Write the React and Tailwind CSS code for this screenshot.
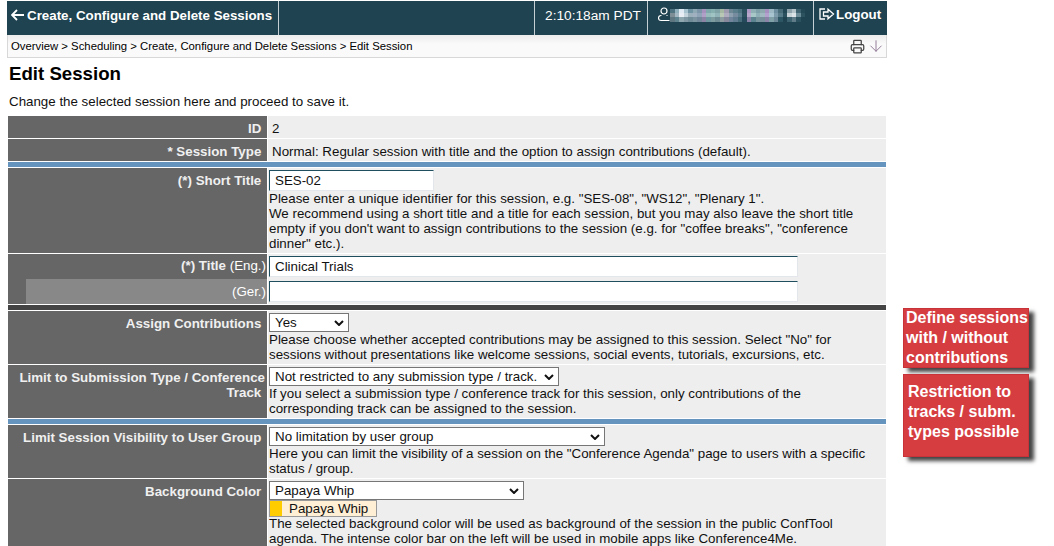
import React from "react";
import { Printer, ArrowDown } from "lucide-react";

// pixelated user name in the top bar, one colour per cell
const blurTop = ["#4f7380", "#8fb0bc", "#dfeaf2", "#a8c4d0", "#6f94a4", "#8ea8b4", "#7d95a8", "#a593bd", "#7fa8ac", "#86b0b0", "#7fa3a6", "#a5b8a4", "#a09cb0", "#6d8794", "#5b7f8c", "#4d7280", "#2a505d", "#ad9ac4", "#8fb0b4", "#7ea0a8", "#8ea8b0", "#a590c0", "#9cb8c4", "#6e8fa0", "#4a6d7a", "#234956", "#8fa4ac", "#b4c4c8", "#3f6270", "#234956"];
const blurMid = ["#7d8e96", "#a4b8c4", "#e8eef4", "#c4d4dc", "#9cb0bc", "#a0b0c0", "#90a4b8", "#b0a0c8", "#98bcbc", "#a0c4c4", "#90b4b8", "#b8c8b4", "#b0acc0", "#8ca0b0", "#788ca0", "#5c8090", "#2c5260", "#b8a8cc", "#a8c8c8", "#90b0b8", "#a0b8c0", "#b4a0cc", "#a8c4d0", "#7c9cac", "#587c8a", "#2c5260", "#c8d4d8", "#dce4e8", "#6c8c98", "#2c5260"];
const blurBottom = ["#5e7680", "#5f8490", "#8fa8b0", "#8098a4", "#6f8c98", "#7c93a0", "#74889c", "#8c84a4", "#7098a0", "#7c9ca0", "#708c94", "#8c9ca0", "#88889c", "#70849c", "#607c90", "#476c7a", "#24495a", "#8c84a8", "#5c8490", "#78949c", "#78909c", "#8c84a8", "#80a0a8", "#6c8898", "#2c5664", "#1f4350", "#3c6270", "#5f7c88", "#2c5260", "#1f4350"];

const Row = ({ label, plain, className = "", children }) => (
  <div className={`flex mb-px ${className}`}>
    <div className="w-[259px] shrink-0 bg-[#666666] text-[#f0f0f0] font-bold text-right pr-[2px] pl-2 pt-[5px] leading-[15px]">{label}&nbsp;</div>
    <div className={`flex-1 ml-px bg-[#eeeeee] pr-2 leading-[15px] ${plain ? "pl-[4px] pt-[5px]" : "pl-[1px] pt-[2px]"}`}>{children}</div>
  </div>
);

const Select = ({ className, children }) => (
  <div className={`h-[19px] bg-white border border-[#767676] pl-[5px] pr-[4px] flex items-center justify-between leading-none ${className}`}>
    <span>{children}</span>
    <svg width="10" height="6" viewBox="0 0 10 6" className="shrink-0" fill="none" stroke="#111" strokeWidth="2"><path d="M1 1l4 4 4-4" /></svg>
  </div>
);

const TextBox = ({ className, children }) => (
  <div className={`h-[21px] bg-white border border-[#e3e6ea] border-t-[#1f4e5f] border-l-[#1f4e5f] pl-[5px] flex items-center leading-none ${className}`}>{children}</div>
);

const Note = ({ className, children }) => (
  <div className={`absolute left-[903px] w-[126px] bg-[#d63d40] border border-[#c8333a] text-white font-bold text-[16px] leading-[20px] whitespace-nowrap shadow-[5px_4px_4px_#444444] ${className}`}>{children}</div>
);

export default function App() {
  return (
    <div className="relative w-[1054px] h-[546px] overflow-hidden bg-white text-[#111111] text-[13.33px] font-['Liberation_Sans',Arial,sans-serif]">
      <div className="pl-[7px] pt-[1px] w-[887px]">
        <div className="flex h-[34px] bg-[#1f4350] text-white font-bold text-[13.33px] leading-[30px]">
          <div className="w-[272px] flex items-start pl-[4px] border-r border-[#c5d0d4] whitespace-nowrap">
            <svg width="13" height="12" viewBox="0 0 13 12" fill="none" stroke="white" strokeWidth="1.8" className="mt-[8px] mr-[3px] shrink-0"><path d="M6 1L1 6l5 5M1 6h12" /></svg>
            Create, Configure and Delete Sessions
          </div>
          <div className="flex-1" />
          <div className="w-[113px] border-l border-[#c5d0d4] text-center font-normal text-[13.7px] pl-[4px]">2:10:18am PDT</div>
          <div className="w-[166px] border-l border-[#c5d0d4] flex items-start pl-[10px]">
            <svg width="12" height="15" viewBox="0 0 12 15" fill="none" stroke="white" strokeWidth="1.2" className="mt-[6px] shrink-0">
              <circle cx="6" cy="4" r="3" />
              <path d="M3.5 8.5H3a2.4 2.4 0 0 0 0 5h8.5" />
              <path d="M8.5 8.5H9.5" />
            </svg>
            <svg width="135" height="13" viewBox="0 0 135 13" className="mt-[8px] shrink-0" shapeRendering="crispEdges">
              {blurTop.map((c, i) => <rect key={i} x={i * 4.5} y="0" width="4.5" height="4" fill={c} />)}
              {blurMid.map((c, i) => <rect key={i} x={i * 4.5} y="4" width="4.5" height="4" fill={c} />)}
              {blurBottom.map((c, i) => <rect key={i} x={i * 4.5} y="8" width="4.5" height="5" fill={c} />)}
            </svg>
          </div>
          <div className="w-[74px] border-l border-[#c5d0d4] flex items-start pl-[5px] leading-[28px]">
            <svg width="16" height="12" viewBox="0 0 16 12" fill="none" stroke="white" strokeWidth="1.3" className="mt-[7px] mr-[1px] shrink-0">
              <path d="M6 1H1v10h5" />
              <path d="M4.5 4h4.5V1.2L14.5 6 9 10.8V8H4.5z" />
            </svg>
            Logout
          </div>
        </div>
        <div className="h-[23px] bg-gradient-to-b from-[#ececec] to-[#fafafa] to-40% border-b border-x border-[#d8d8d8] flex items-center justify-between pl-[3px] pr-[1px] text-[11.33px] text-[#000000]">
          <span>Overview &gt; Scheduling &gt; Create, Configure and Delete Sessions &gt; Edit Session</span>
          <div className="flex items-center gap-[2px] text-[#444444]">
            <Printer size={15} />
            <ArrowDown size={18} strokeWidth={1.2} className="text-[#8a7090]" />
          </div>
        </div>
      </div>

      <div className="pl-[9px] mt-[4px] text-[18.67px] font-bold leading-[24px] text-black">Edit Session</div>
      <div className="pl-[9px] mt-[8px] leading-[15px]">Change the selected session here and proceed to save it.</div>

      <div className="ml-[8px] mt-[7px] w-[878px]">
        <Row plain label="ID" className="h-[22px]">2</Row>
        <Row plain label="* Session Type" className="h-[22px]">Normal: Regular session with title and the option to assign contributions (default).</Row>
        <div className="h-[5px] bg-[#6595bf] mb-px" />

        <Row label="(*) Short Title" className="h-[85px]">
          <TextBox className="w-[165px]">SES-02</TextBox>
          <div>Please enter a unique identifier for this session, e.g. "SES-08", "WS12", "Plenary 1".<br />We recommend using a short title and a title for each session, but you may also leave the short title<br />empty if you don't want to assign contributions to the session (e.g. for "coffee breaks", "conference<br />dinner" etc.).</div>
        </Row>

        <div className="flex h-[50px] mb-px">
          <div className="w-[259px] shrink-0 bg-[#666666] text-white text-right flex flex-col">
            <div className="h-[25px] pr-[1px] pt-[4px] leading-[15px]"><b className="text-[#f0f0f0]">(*) Title</b> (Eng.)</div>
            <div className="ml-[18px] flex-1 bg-[#888888] pr-[1px] pt-[5px] leading-[15px]">(Ger.)</div>
          </div>
          <div className="flex-1 ml-px bg-[#eeeeee] pl-[1px] pt-[2px] flex flex-col gap-[4px]">
            <TextBox className="w-[529px]">Clinical Trials</TextBox>
            <TextBox className="w-[529px]" />
          </div>
        </div>
        <div className="h-[5px] bg-[#444444] mb-px" />

        <Row label="Assign Contributions" className="h-[53px]">
          <Select className="w-[80px]">Yes</Select>
          <div>Please choose whether accepted contributions may be assigned to this session. Select "No" for<br />sessions without presentations like welcome sessions, social events, tutorials, excursions, etc.</div>
        </Row>
        <Row label="Limit to Submission Type / Conference Track" className="h-[53px]">
          <Select className="w-[290px]">Not restricted to any submission type / track.</Select>
          <div>If you select a submission type / conference track for this session, only contributions of the<br />corresponding track can be assigned to the session.</div>
        </Row>
        <div className="h-[5px] bg-[#6595bf] mb-px" />

        <Row label="Limit Session Visibility to User Group" className="h-[53px]">
          <Select className="w-[336px]">No limitation by user group</Select>
          <div>Here you can limit the visibility of a session on the "Conference Agenda" page to users with a specific<br />status / group.</div>
        </Row>
        <Row label="Background Color" className="h-[70px]">
          <Select className="w-[255px]">Papaya Whip</Select>
          <div className="flex w-[108px] h-[17px] border border-[#999999] bg-[#ffefd5] items-center leading-none">
            <div className="w-[12px] h-full bg-[#ffcc00] shrink-0" />
            <span className="pl-[7px]">Papaya Whip</span>
          </div>
          <div className="-mt-[1px]">The selected background color will be used as background of the session in the public ConfTool<br />agenda. The intense color bar on the left will be used in mobile apps like Conference4Me.</div>
        </Row>
      </div>

      <Note className="top-[308px] h-[60px] pl-[2px]"><div className="-mt-px">Define sessions<br />with / without<br />contributions</div></Note>
      <Note className="top-[374px] h-[83px] pl-[4px] pt-[7px]">Restriction to<br />tracks / subm.<br />types possible</Note>
    </div>
  );
}
